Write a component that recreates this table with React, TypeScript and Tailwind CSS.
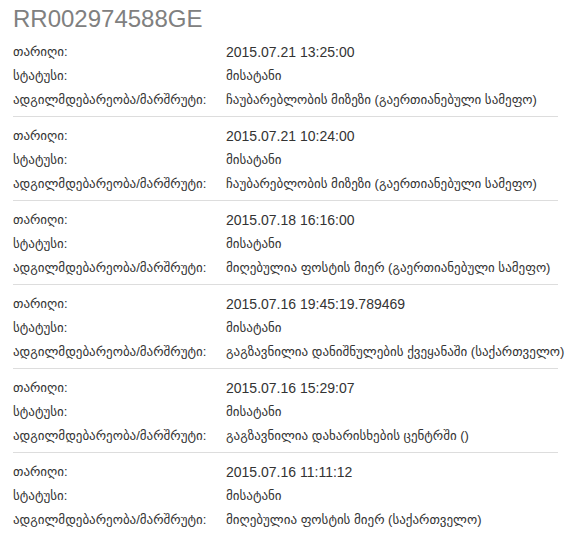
const events = [
  {
    date: "2015.07.21 13:25:00",
    status: "მისატანი",
    place: "ჩაუბარებლობის მიზეზი (გაერთიანებული სამეფო)",
  },
  {
    date: "2015.07.21 10:24:00",
    status: "მისატანი",
    place: "ჩაუბარებლობის მიზეზი (გაერთიანებული სამეფო)",
  },
  {
    date: "2015.07.18 16:16:00",
    status: "მისატანი",
    place: "მიღებულია ფოსტის მიერ (გაერთიანებული სამეფო)",
  },
  {
    date: "2015.07.16 19:45:19.789469",
    status: "მისატანი",
    place: "გაგზავნილია დანიშნულების ქვეყანაში (საქართველო)",
  },
  {
    date: "2015.07.16 15:29:07",
    status: "მისატანი",
    place: "გაგზავნილია დახარისხების ცენტრში ()",
  },
  {
    date: "2015.07.16 11:11:12",
    status: "მისატანი",
    place: "მიღებულია ფოსტის მიერ (საქართველო)",
  },
];

const Row = ({ label, value, num }: { label: string; value: string; num?: boolean }) => (
  <div className="flex h-[24px] items-center whitespace-nowrap">
    <div className="w-[213px] shrink-0 text-[13px]">{label}</div>
    <div className={num ? "text-[14px]" : "text-[13px]"}>{value}</div>
  </div>
);

export default function App() {
  return (
    <div
      className="min-h-screen bg-white pl-[13px] text-[#333]"
      style={{ fontFamily: '"Liberation Sans", "DejaVu Sans", sans-serif' }}
    >
      <div className="w-[545px]">
        <h3 className="pt-[5px] text-[24px] leading-[28px] text-[#808080]">
          RR002974588GE
        </h3>
        {events.map((e, i) => (
          <div
            key={i}
            className={i < events.length - 1 ? "border-b border-[#ddd] pt-[7px] pb-[4px]" : "pt-[7px]"}
          >
            <Row label="თარიღი:" value={e.date} num />
            <Row label="სტატუსი:" value={e.status} />
            <Row label="ადგილმდებარეობა/მარშრუტი:" value={e.place} />
          </div>
        ))}
      </div>
    </div>
  );
}
